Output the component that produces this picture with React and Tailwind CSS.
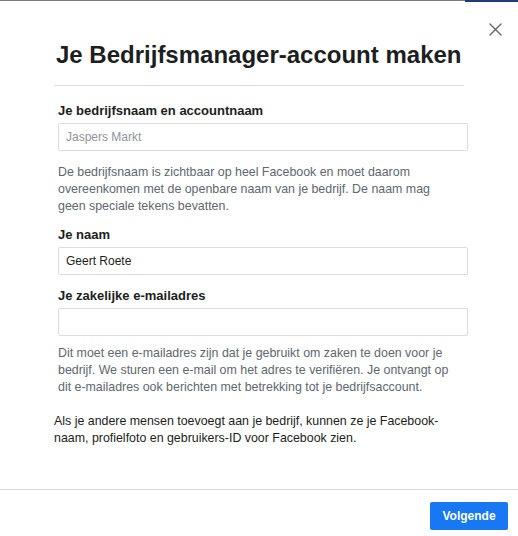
import React from "react";

function Field({ label, value, placeholder, labelMt }) {
  return (
    <>
      <div className={`${labelMt} ml-[4px] text-[13px] leading-[16px] font-bold text-[#1c1e21]`}>{label}</div>
      <div className="mt-[4px] ml-[4px] w-[410px] h-[28px] border border-[#dadde1] rounded-[2px] flex items-center px-[7px] text-[12px]">
        {value ? (
          <span className="text-[#1c1e21]">{value}</span>
        ) : placeholder ? (
          <span className="text-[#90949c]">{placeholder}</span>
        ) : null}
      </div>
    </>
  );
}

function Lines({ lines, className }) {
  return (
    <div className={className}>
      {lines.map((l, i) => (
        <div key={i} className="whitespace-nowrap">{l}</div>
      ))}
    </div>
  );
}

export default function App() {
  return (
    <div className="relative w-[518px] h-[536px] bg-white flex flex-col font-['Liberation_Sans',Arial,sans-serif] overflow-hidden">
      <div className="flex items-start h-[2px]">
        <div className="flex-1 h-px bg-[#7b7b7b]" />
        <div className="w-[53px] h-[2px] bg-[#1d3d78]" />
      </div>

      <button className="absolute left-[489px] top-[23px] w-[13px] h-[13px] p-0">
        <svg viewBox="0 0 13 13" width="13" height="13" fill="none" stroke="#606770" strokeWidth="1.4" strokeLinecap="round">
          <path d="M1 1 L12 12 M12 1 L1 12" />
        </svg>
      </button>

      <div className="flex-1 flex flex-col pl-[54px]">
        <h1 className="mt-[39px] pl-[2px] text-[24px] leading-[28px] font-bold text-[#1c1e21] whitespace-nowrap">
          Je Bedrijfsmanager-account maken
        </h1>
        <div className="mt-[16px] w-[410px] h-px bg-[#dadde1]" />

        <Field label="Je bedrijfsnaam en accountnaam" placeholder="Jaspers Markt" labelMt="mt-[17px]" />
        <Lines
          className="mt-[13px] ml-[4px] text-[12.4px] leading-[17px] text-[#606770]"
          lines={[
            "De bedrijfsnaam is zichtbaar op heel Facebook en moet daarom",
            "overeenkomen met de openbare naam van je bedrijf. De naam mag",
            "geen speciale tekens bevatten.",
          ]}
        />

        <Field label="Je naam" value="Geert Roete" labelMt="mt-[12px]" />
        <Field label="Je zakelijke e-mailadres" labelMt="mt-[13px]" />
        <Lines
          className="mt-[9px] ml-[4px] text-[12.4px] leading-[17px] text-[#606770]"
          lines={[
            "Dit moet een e-mailadres zijn dat je gebruikt om zaken te doen voor je",
            "bedrijf. We sturen een e-mail om het adres te verifiëren. Je ontvangt op",
            "dit e-mailadres ook berichten met betrekking tot je bedrijfsaccount.",
          ]}
        />
        <Lines
          className="mt-[17px] text-[12.4px] leading-[17px] text-[#1c1e21]"
          lines={[
            "Als je andere mensen toevoegt aan je bedrijf, kunnen ze je Facebook-",
            "naam, profielfoto en gebruikers-ID voor Facebook zien.",
          ]}
        />
      </div>

      <div className="h-[47px] border-t border-[#dadde1] flex justify-end items-start pt-[12px] pr-[10px]">
        <button className="w-[78px] h-[28px] bg-[#1877f2] rounded-[2px] text-white text-[12px] font-bold flex items-center justify-center">
          Volgende
        </button>
      </div>
    </div>
  );
}
